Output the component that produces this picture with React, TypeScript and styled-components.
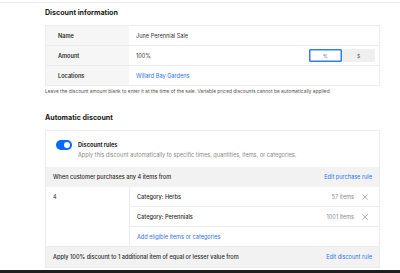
import React from "react"
import styled, { createGlobalStyle, css } from "styled-components"

const GlobalStyle = createGlobalStyle`
  html, body {
    margin: 0;
    padding: 0;
    background: #ffffff;
    overflow: hidden;
  }
  body {
    font-family: Inter, "Liberation Sans", sans-serif;
    color: #1f1f1f;
    -webkit-font-smoothing: antialiased;
  }
`

const infoRows = [
  { label: "Name", value: "June Perennial Sale" },
  { label: "Amount", value: "100%" },
  { label: "Locations", value: "Willard Bay Gardens", link: true },
]

const categories = [
  { name: "Category: Herbs", count: "57 items" },
  { name: "Category: Perennials", count: "1001 items" },
]

const CloseIcon = () => (
  <svg width="6" height="6" viewBox="0 0 10 10" fill="none">
    <path d="M1 1L9 9M9 1L1 9" stroke="#9a9a9a" strokeWidth="1.2" strokeLinecap="round" />
  </svg>
)

const App = () => {
  return (
    <Page>
      <GlobalStyle />
      <TopRule />
      <Main>
        <SectionTitle>Discount information</SectionTitle>
        <InfoTable>
          {infoRows.map((row) => (
            <InfoRow key={row.label}>
              <LabelCell>{row.label}</LabelCell>
              <ValueCell>
                {row.link ? <LinkText>{row.value}</LinkText> : row.value}
                {row.label === "Amount" && (
                  <Segmented>
                    <SegButton $active>%</SegButton>
                    <SegButton>$</SegButton>
                  </Segmented>
                )}
              </ValueCell>
            </InfoRow>
          ))}
        </InfoTable>
        <HelpText>
          Leave the discount amount blank to enter it at the time of the sale. Variable priced discounts cannot be
          automatically applied.
        </HelpText>

        <SectionTitle $spaced>Automatic discount</SectionTitle>
        <Card>
          <ToggleRow>
            <Toggle>
              <Knob />
            </Toggle>
            <div>
              <ToggleTitle>Discount rules</ToggleTitle>
              <ToggleSub>Apply this discount automatically to specific times, quantities, items, or categories.</ToggleSub>
            </div>
          </ToggleRow>

          <RuleHeader>
            <span>When customer purchases any 4 items from</span>
            <LinkText>Edit purchase rule</LinkText>
          </RuleHeader>
          <RuleBody>
            <QtyCell>4</QtyCell>
            <ItemList>
              {categories.map((c) => (
                <ItemRow key={c.name}>
                  <span>{c.name}</span>
                  <ItemMeta>
                    <Count>{c.count}</Count>
                    <CloseIcon />
                  </ItemMeta>
                </ItemRow>
              ))}
              <ItemRow>
                <LinkText>Add eligible items or categories</LinkText>
              </ItemRow>
            </ItemList>
          </RuleBody>
          <RuleHeader>
            <span>Apply 100% discount to 1 additional item of equal or lesser value from</span>
            <LinkText>Edit discount rule</LinkText>
          </RuleHeader>
        </Card>
      </Main>
      <BottomBar />
    </Page>
  )
}

export default App

const Page = styled.div`
  width: 400px;
  height: 273px;
  display: flex;
  flex-direction: column;
  overflow: hidden;
`

const TopRule = styled.div`
  height: 2px;
  flex-shrink: 0;
  border-bottom: 1px solid #ededed;
`

const Main = styled.div`
  flex: 1;
  padding: 0 20px 0 45px;
  overflow: hidden;
`

const SectionTitle = styled.div<{ $spaced?: boolean }>`
  font-size: 7.1px;
  font-weight: 700;
  line-height: 10px;
  margin-top: 5px;
  margin-bottom: 7px;
  color: #1a1a1a;
  ${(p) =>
    p.$spaced &&
    css`
      margin-top: 19px;
      margin-bottom: 7px;
    `}
`

const InfoTable = styled.div`
  border: 1px solid #ececec;
`

const InfoRow = styled.div`
  display: grid;
  grid-template-columns: 83px 1fr;
  height: 19px;
  border-bottom: 1px solid #ececec;
  &:last-child {
    border-bottom: none;
  }
`

const cellText = css`
  font-size: 5.6px;
  display: flex;
  align-items: center;
`

const LabelCell = styled.div`
  ${cellText}
  background: #f6f6f6;
  padding-left: 12px;
  font-weight: 600;
  color: #2a2a2a;
`

const ValueCell = styled.div`
  ${cellText}
  padding: 0 4px 0 7px;
  color: #333;
`

const LinkText = styled.span`
  color: #2d73e6;
  font-weight: 400;
`

const Segmented = styled.div`
  margin-left: auto;
  display: flex;
`

const SegButton = styled.div<{ $active?: boolean }>`
  width: 33px;
  height: 13px;
  box-sizing: border-box;
  display: flex;
  align-items: center;
  justify-content: center;
  font-size: 5px;
  color: #666;
  background: ${(p) => (p.$active ? "#ffffff" : "#efefef")};
  border: ${(p) => (p.$active ? "1px solid #2f7ef5" : "1px solid transparent")};
  box-shadow: ${(p) => (p.$active ? "inset 0 0 0 0.5px #2f7ef5" : "none")};
  border-radius: 1px;
`

const HelpText = styled.div`
  font-size: 4.85px;
  line-height: 6px;
  color: #555;
  margin-top: 2px;
  white-space: nowrap;
`

const Card = styled.div`
  border: 1px solid #ececec;
`

const ToggleRow = styled.div`
  display: flex;
  align-items: flex-start;
  gap: 6px;
  padding: 9px 10px 8px 10px;
`

const Toggle = styled.div`
  width: 16px;
  height: 10px;
  border-radius: 5px;
  background: #006aff;
  position: relative;
  flex-shrink: 0;
`

const Knob = styled.div`
  position: absolute;
  right: 2px;
  top: 2px;
  width: 6px;
  height: 6px;
  border-radius: 50%;
  background: #fff;
`

const ToggleTitle = styled.div`
  font-size: 5.6px;
  font-weight: 700;
  line-height: 8px;
  margin-top: 1px;
`

const ToggleSub = styled.div`
  font-size: 5.6px;
  line-height: 8px;
  color: #8a8a8a;
  margin-top: 2px;
  white-space: nowrap;
`

const RuleHeader = styled.div`
  background: #f2f2f2;
  height: 20px;
  display: flex;
  align-items: center;
  justify-content: space-between;
  padding: 0 7px 0 7px;
  font-size: 5.6px;
  font-weight: 500;
  color: #2a2a2a;
`

const RuleBody = styled.div`
  display: grid;
  grid-template-columns: 83px 1fr;
  border-bottom: 1px solid #ececec;
`

const QtyCell = styled.div`
  font-size: 5.6px;
  padding: 7px 0 0 7px;
  color: #333;
`

const ItemList = styled.div`
  border-left: 1px solid #ececec;
`

const ItemRow = styled.div`
  height: 19px;
  display: flex;
  align-items: center;
  justify-content: space-between;
  padding: 0 11px 0 7px;
  font-size: 5.6px;
  font-weight: 500;
  color: #2a2a2a;
  border-top: 1px solid #ececec;
  &:first-child {
    border-top: none;
  }
`

const ItemMeta = styled.div`
  display: flex;
  align-items: center;
  gap: 8px;
`

const Count = styled.span`
  color: #8a8a8a;
  font-weight: 400;
`

const BottomBar = styled.div`
  height: 3px;
  flex-shrink: 0;
  background: #1e1e1e;
`
